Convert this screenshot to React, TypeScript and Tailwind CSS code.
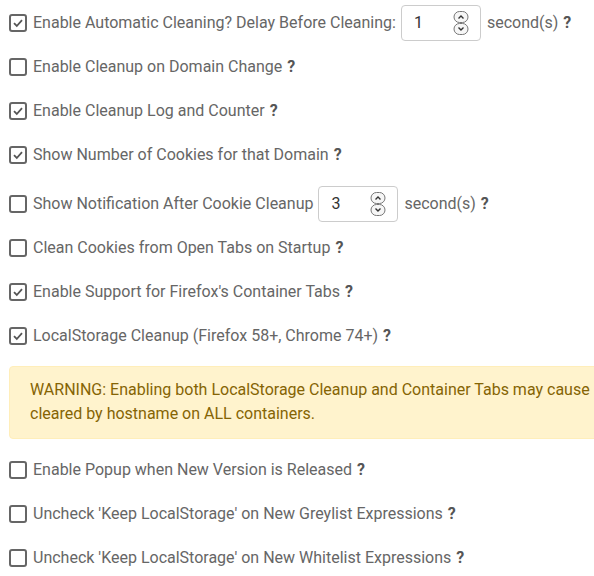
function Check({ on }: { on: boolean }) {
  return (
    <span className="w-[18px] h-[18px] shrink-0 border-2 border-[#666] rounded-[3px] flex items-center justify-center bg-white">
      {on && (
        <svg width="12" height="12" viewBox="0 0 12 12">
          <path d="M2 6.2 L4.8 9 L10 3.2" fill="none" stroke="#555" strokeWidth="1.8" />
        </svg>
      )}
    </span>
  );
}

function Help() {
  return <span className="font-bold text-[#555] ml-[5px]">?</span>;
}

function NumberBox({ value }: { value: string }) {
  return (
    <span className="w-[80px] h-[36px] border border-[#ccc] rounded-[4px] flex items-center justify-between pl-[12px] pr-[11px] ml-[5px] mr-[6px] text-[#333]">
      <span>{value}</span>
      <svg width="16" height="26" viewBox="0 0 16 26">
        <rect x="1" y="1.5" width="14" height="11" rx="5.5" fill="#f6f6f6" stroke="#777" strokeWidth="1" />
        <rect x="1" y="13.5" width="14" height="11" rx="5.5" fill="#f6f6f6" stroke="#777" strokeWidth="1" />
        <path d="M5.5 8.5 L8 6 L10.5 8.5" fill="none" stroke="#333" strokeWidth="1.4" />
        <path d="M5.5 17.5 L8 20 L10.5 17.5" fill="none" stroke="#333" strokeWidth="1.4" />
      </svg>
    </span>
  );
}

function Row({ on, children, className = "" }: { on: boolean; children: React.ReactNode; className?: string }) {
  return (
    <div className={"flex items-center h-[44px] pl-[9px] whitespace-nowrap " + className}>
      <Check on={on} />
      <span className="ml-[6px] flex items-center">{children}</span>
    </div>
  );
}

export default function App() {
  return (
    <div
      className="w-[594px] h-[576px] overflow-hidden bg-white pt-[1px] text-[16px] text-[#666]"
      style={{ fontFamily: "Roboto, 'Noto Sans', sans-serif" }}
    >
      <Row on={true}>
        Enable Automatic Cleaning? Delay Before Cleaning:
        <NumberBox value="1" />
        second(s)
        <Help />
      </Row>
      <Row on={false}>
        Enable Cleanup on Domain Change
        <Help />
      </Row>
      <Row on={true}>
        Enable Cleanup Log and Counter
        <Help />
      </Row>
      <Row on={true}>
        Show Number of Cookies for that Domain
        <Help />
      </Row>
      <Row on={false} className="mt-[5px]">
        Show Notification After Cookie Cleanup
        <NumberBox value="3" />
        second(s)
        <Help />
      </Row>
      <Row on={false}>
        Clean Cookies from Open Tabs on Startup
        <Help />
      </Row>
      <Row on={true}>
        Enable Support for Firefox's Container Tabs
        <Help />
      </Row>
      <Row on={true}>
        LocalStorage Cleanup (Firefox 58+, Chrome 74+)
        <Help />
      </Row>
      <div className="ml-[9px] mt-[8px] w-[600px] h-[73px] bg-[#fff3cd] border border-[#ffeeba] rounded-[4px] pl-[20px] pt-[11px] text-[#856404] leading-[24px] whitespace-nowrap">
        WARNING: Enabling both LocalStorage Cleanup and Container Tabs may cause LocalStorage to be
        <br />
        cleared by hostname on ALL containers.
      </div>
      <Row on={false} className="mt-[9px]">
        Enable Popup when New Version is Released
        <Help />
      </Row>
      <Row on={false}>
        Uncheck 'Keep LocalStorage' on New Greylist Expressions
        <Help />
      </Row>
      <Row on={false}>
        Uncheck 'Keep LocalStorage' on New Whitelist Expressions
        <Help />
      </Row>
    </div>
  );
}
